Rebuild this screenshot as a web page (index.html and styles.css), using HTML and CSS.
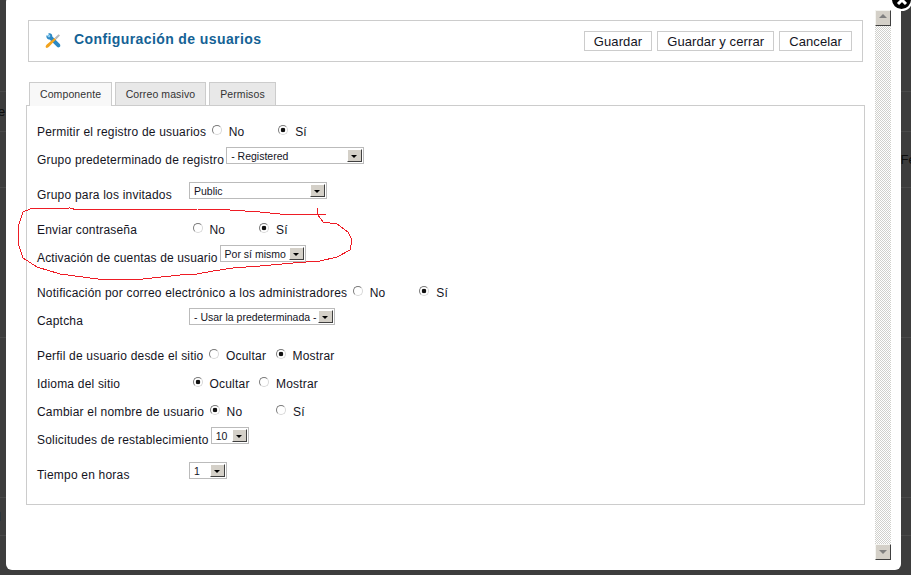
FILE: index.html
```html
<!DOCTYPE html>
<html lang="es">
<head>
<meta charset="utf-8">
<title>Configuración de usuarios</title>
<link rel="stylesheet" href="styles.css">
</head>
<body>
<div class="backdrop">
  <div class="bg-row bg-h1"></div>
  <div class="bg-row bg-h2"><span>e</span></div>
  <div class="bg-row bg-h3"><span></span><span>Fe</span></div>
  <div class="bg-row bg-h4"></div>
  <div class="bg-row bg-h5"></div>
  <div class="bg-row bg-h6"><span>l</span></div>
</div>

<div class="modal">
  <div class="main">
    <header class="toolbar">
      <svg class="tool-icon" width="16" height="16" viewBox="0 0 16 16" aria-hidden="true">
        <path d="M1.5 2.2 L4 4.4 L5.4 3 L3.2 .6 C5.3 -.2 7.4 1 7.3 3.4 L14.8 11 C15.6 12 15.4 13.4 14.6 14 C13.6 14.8 12.6 14.4 12 13.8 L4.6 6.4 C2.6 6.8 .8 4.8 1.5 2.2 Z" fill="#2a88c4"/>
        <path d="M3.4 1.2 L5.2 3 L4 4.2 L2.2 2.4 Z" fill="#6cc0ee"/>
        <path d="M9.6 5 L11 6.4 L4 13.8 C3.2 14.8 1.6 15.2 .9 14.6 C.3 13.8 .9 12.4 1.8 11.6 Z" fill="#f2a31d"/>
        <path d="M9.8 4.8 L13.6 1.2 L15 2.4 L11.2 6.4 Z" fill="#b4b8bc"/>
      </svg>
      <h1 class="title">Configuración de usuarios</h1>
      <div class="actions">
        <button class="btn" type="button">Guardar</button>
        <button class="btn" type="button">Guardar y cerrar</button>
        <button class="btn" type="button">Cancelar</button>
      </div>
    </header>

    <nav class="tabs">
      <a class="tab tab-active">Componente</a>
      <a class="tab">Correo masivo</a>
      <a class="tab">Permisos</a>
    </nav>

    <section class="panel">
      <div class="row">
        <span class="label">Permitir el registro de usuarios</span>
        <input class="radio" type="radio" name="r1"><span class="opt">No</span>
        <input class="radio" type="radio" name="r1" checked><span class="opt">Sí</span>
      </div>
      <div class="row row-tall">
        <span class="label">Grupo predeterminado de registro</span>
        <span class="select w-registered"><span class="select-text">- Registered</span><span class="select-btn"></span></span>
      </div>
      <div class="row row-tall">
        <span class="label">Grupo para los invitados</span>
        <span class="select w-public"><span class="select-text">Public</span><span class="select-btn"></span></span>
      </div>
      <div class="row">
        <span class="label">Enviar contraseña</span>
        <input class="radio" type="radio" name="r2"><span class="opt">No</span>
        <input class="radio" type="radio" name="r2" checked><span class="opt">Sí</span>
      </div>
      <div class="row row-tall">
        <span class="label label-tight">Activación de cuentas de usuario</span>
        <span class="select w-act"><span class="select-text">Por sí mismo</span><span class="select-btn"></span></span>
      </div>
      <div class="row">
        <span class="label">Notificación por correo electrónico a los administradores</span>
        <input class="radio" type="radio" name="r3"><span class="opt">No</span>
        <input class="radio" type="radio" name="r3" checked><span class="opt">Sí</span>
      </div>
      <div class="row row-tall">
        <span class="label">Captcha</span>
        <span class="select w-captcha"><span class="select-text">- Usar la predeterminada -</span><span class="select-btn"></span></span>
      </div>
      <div class="row">
        <span class="label">Perfil de usuario desde el sitio</span>
        <input class="radio" type="radio" name="r4"><span class="opt">Ocultar</span>
        <input class="radio" type="radio" name="r4" checked><span class="opt">Mostrar</span>
      </div>
      <div class="row">
        <span class="label">Idioma del sitio</span>
        <input class="radio" type="radio" name="r5" checked><span class="opt">Ocultar</span>
        <input class="radio" type="radio" name="r5"><span class="opt">Mostrar</span>
      </div>
      <div class="row">
        <span class="label">Cambiar el nombre de usuario</span>
        <input class="radio" type="radio" name="r6" checked><span class="opt">No</span>
        <input class="radio" type="radio" name="r6"><span class="opt">Sí</span>
      </div>
      <div class="row row-tall">
        <span class="label">Solicitudes de restablecimiento</span>
        <span class="select w-num"><span class="select-text">10</span><span class="select-btn"></span></span>
      </div>
      <div class="row row-tall">
        <span class="label">Tiempo en horas</span>
        <span class="select w-num"><span class="select-text">1</span><span class="select-btn"></span></span>
      </div>
    </section>
  </div>

  <div class="scrollbar">
    <span class="sb-btn sb-up"></span>
    <span class="sb-track"></span>
    <span class="sb-btn sb-down"></span>
  </div>
</div>

<svg class="scribble" width="911" height="575" viewBox="0 0 911 575" aria-hidden="true">
  <path d="M326 214 L280 214 L260 212 L230 210 L197 209 L183 209 L77 210 L70 208 L30 209 L23 212 L18 227 L18 243 L23 258 L37 267 L60 274 L98 279 L143 279 L180 275 L197 274 L213 271 L233 268 L260 266 L293 263 L320 261 L337 257 L350 250 L352 240 L348 232 L337 224 L323 222 L318 215 L317 208" fill="none" stroke="#ee1c25" stroke-width="1" shape-rendering="crispEdges"/>
</svg>

<button class="close" type="button" aria-label="Cerrar">
  <svg width="12" height="12" viewBox="0 0 12 12" aria-hidden="true"><path d="M2 2 L10 10 M10 2 L2 10" stroke="#fff" stroke-width="3"/></svg>
</button>
</body>
</html>
```
FILE: styles.css
```css
* { box-sizing: border-box; }
html, body { margin: 0; height: 100%; }
body {
  width: 911px;
  height: 575px;
  overflow: hidden;
  background: #3d3d3d;
  font-family: "Liberation Sans", Arial, sans-serif;
  font-size: 12px;
  letter-spacing: .2px;
  color: #14141e;
}

/* page dimmed behind the modal */
.backdrop { color: #0c0c0c; font-size: 13px; }
.bg-row {
  display: flex;
  justify-content: space-between;
  align-items: center;
  border-bottom: 1px solid #4a4a4a;
}
.bg-row span:last-child { margin-left: auto; }
.bg-row span:first-child:last-child { margin-left: -2px; }
.bg-row span:last-child:not(:first-child) { margin-right: -5px; }
.bg-h1 { height: 92px; }
.bg-h2 { height: 40px; }
.bg-h3 { height: 56px; }
.bg-h4 { height: 150px; }
.bg-h5 { height: 160px; }
.bg-h6 { height: 38px; }

.modal {
  position: absolute;
  left: 6px;
  top: -4px;
  width: 895px;
  height: 574px;
  background: #fff;
  border-radius: 6px;
  display: flex;
}
.main { width: 869px; padding: 24px 0 0 20px; flex: none; }

.toolbar {
  width: 835px;
  height: 42px;
  margin-left: 2px;
  border: 1px solid #ccc;
  display: flex;
  align-items: flex-start;
}
.tool-icon { margin: 12px 0 0 16px; flex: none; }
.title {
  margin: 10px 0 0 13px;
  font-size: 14px;
  line-height: 16px;
  letter-spacing: .4px;
  font-weight: bold;
  color: #146295;
}
.actions { margin: 10px 10px 0 auto; display: flex; gap: 5px; }
.btn {
  height: 20px;
  padding: 1px 9px 0;
  background: #fff;
  border: 1px solid #ccc;
  font: 13px/18px "Liberation Sans", Arial, sans-serif;
  letter-spacing: .1px;
  color: #14141e;
}

.tabs { display: flex; gap: 3px; margin: 20px 0 -1px 3px; position: relative; }
.tab {
  height: 23px;
  padding: 0 10px;
  border: 1px solid #ccc;
  border-bottom: 0;
  background: #e8e8e8;
  font-size: 10.5px;
  letter-spacing: .1px;
  line-height: 23px;
  color: #333;
}
.tab-active { background: #f8f8f8; height: 24px; padding: 0 9.5px 0 10px; position: relative; z-index: 1; }

.panel {
  width: 839px;
  height: 400px;
  border: 1px solid #ccc;
  padding: 11px 0 0 10px;
}

.row { display: flex; align-items: flex-start; height: 28px; }
.row-tall { height: 35px; }
.label { min-width: 150px; margin-top: 7px; line-height: 16px; white-space: nowrap; }
.label-tight { letter-spacing: .14px; }
.opt { min-width: 49.5px; margin-top: 7px; line-height: 16px; }

.radio {
  appearance: none;
  width: 10px;
  height: 10px;
  margin: 8px 7px 0 5.5px;
  flex: none;
  border-radius: 50%;
  border: 1px solid;
  border-color: #7a7a7a #d8d8d8 #d8d8d8 #7a7a7a;
  background: #fff;
}
.radio + .opt + .radio { margin-left: 0; }
.radio:checked { background: radial-gradient(circle at center, #111 0 2px, #fff 2.6px); }

.select {
  display: flex;
  height: 17px;
  margin: 2px 0 0 2px;
  border: 1px solid #bbb;
  background: #fff;
  padding: 1px;
  font-size: 10.5px;
  letter-spacing: 0;
  line-height: 15px;
}
.select-text { flex: 1; padding-left: 3px; white-space: nowrap; }
.select-btn {
  position: relative;
  width: 15px;
  flex: none;
  background: #d4d0c8;
  border: 1px solid;
  border-color: #fff #404040 #404040 #fff;
}
.select-btn::after {
  content: "";
  position: absolute;
  left: 3px;
  top: 5px;
  border: 3px solid transparent;
  border-top: 3px solid #000;
  border-bottom: 0;
}
.w-registered { width: 138px; }
.w-public { width: 138px; }
.w-act { width: 86px; }
.w-captcha { width: 146px; }
.w-num { width: 38px; }

.scrollbar {
  width: 16px;
  height: 550px;
  margin-top: 14px;
  display: flex;
  flex-direction: column;
  background: repeating-conic-gradient(#d0d0cc 0 25%, #fff 0 50%) 0 0 / 2px 2px;
}
.sb-btn {
  position: relative;
  height: 16px;
  flex: none;
  background: #d4d0c8;
  border: 1px solid;
  border-color: #f4f4f0 #404040 #404040 #f4f4f0;
}
.sb-track { flex: 1; }
.sb-up::after, .sb-down::after {
  content: "";
  position: absolute;
  left: 3px;
  border: 4px solid transparent;
}
.sb-up::after { top: 3px; border-top: 0; border-bottom: 4px solid #808080; }
.sb-down::after { top: 5px; border-bottom: 0; border-top: 4px solid #808080; }

.scribble { position: absolute; left: 0; top: 0; pointer-events: none; }

.close {
  position: absolute;
  left: 890px;
  top: -12px;
  width: 23px;
  height: 23px;
  padding: 0;
  border-radius: 50%;
  background: #000;
  border: 2px solid #fff;
  display: flex;
  align-items: center;
  justify-content: center;
}
```
